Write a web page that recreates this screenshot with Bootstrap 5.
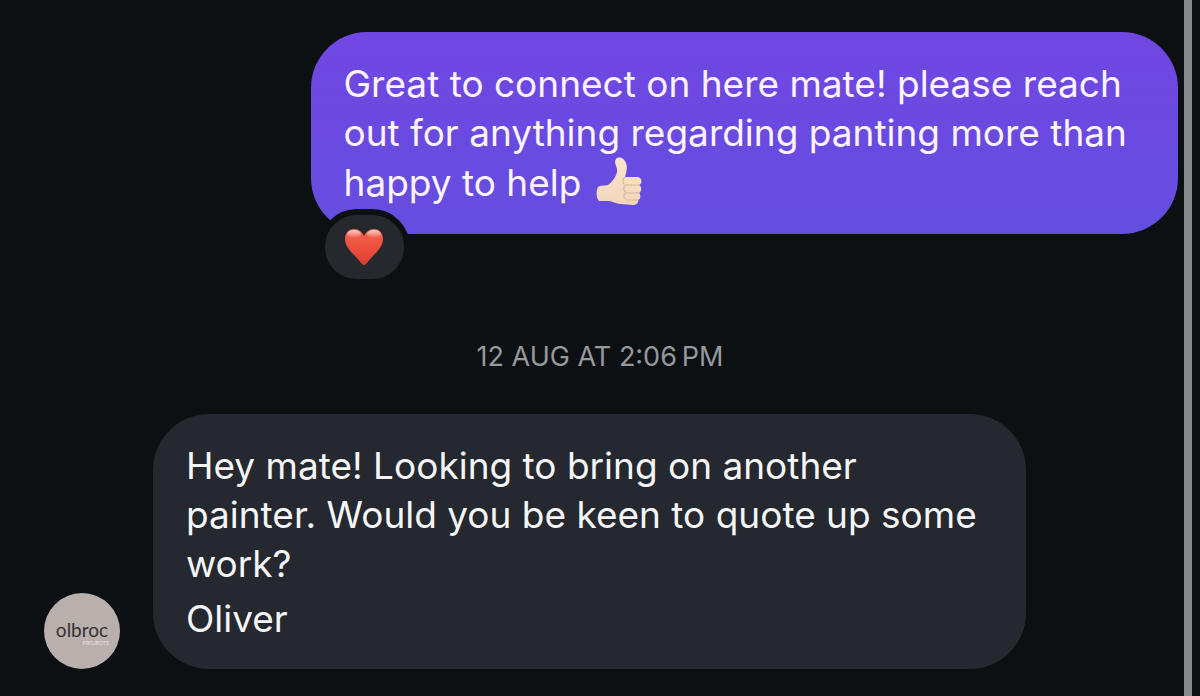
<!DOCTYPE html>
<html lang="en">
<head>
<meta charset="utf-8">
<meta name="viewport" content="width=device-width, initial-scale=1">
<title>Chat</title>
<link href="https://cdn.jsdelivr.net/npm/bootstrap@5.3.0/dist/css/bootstrap.min.css" rel="stylesheet">
<style>
  body { background: #0c1013; font-family: Inter, "Liberation Sans", sans-serif; }
  .thread { padding: 32px 6px 26px 44px; }
  .bubble { font-size: 37px; line-height: 49px; padding: 27px 33px; border-radius: 56px; color: #f4f5f7; }
  .bubble-sent { width: 76.5%; background: linear-gradient(#7046e2, #644edf); color: #fbf3ff; }
  .bubble-received { width: 77%; padding-right: 42px; padding-bottom: 26px; background: #25282e; }
  .signature { margin-top: 6px; }
  .reaction { left: 8px; top: 177px; width: 91px; height: 76px; border: 6px solid #0c1013; border-radius: 38px; background: #25292d; }
  .emoji { width: 46px; height: 49px; vertical-align: -10px; margin-left: 4px; }
  .stamp { font-size: 27px; line-height: 32px; color: #95989c; margin: 107px 0 41px; padding-right: 22px; }
  .avatar { width: 76px; height: 76px; background: #b9b0ad; color: #37312f; margin-right: 33px; }
  .avatar-name { font: 19px/18px Lato, sans-serif; margin-top: 4px; }
  .avatar-sub { font-size: 5px; line-height: 6px; color: #ece7e5; margin: 1px 11px 0 0; }
  .rail { width: 8px; margin-right: 8px; background: #88898b; }
</style>
</head>
<body>
<div class="d-flex min-vh-100">
  <main class="thread flex-grow-1 d-flex flex-column">
    <div class="d-flex justify-content-end">
      <div class="bubble bubble-sent position-relative">
        Great to connect on here mate! please reach out for anything regarding panting more than happy to help
        <svg class="emoji" viewBox="0 0 46 49" role="img" aria-label="Thumbs up">
          <defs>
            <linearGradient id="skin" x1="0" y1="0" x2="0" y2="1"><stop offset="0" stop-color="#fae6d0"/><stop offset="1" stop-color="#f1d6bb"/></linearGradient>
          </defs>
          <path fill="url(#skin)" d="M2 30C4 28 9 29 12 28C16 25 20 20 21 15C22 10 17 6 20 2C23 -1 28 1 30 6C32 11 30 16 29 20L41 20C46 20 47 26 43 28C46 30 46 34 43 36C45 38 45 42 42 43C43 46 40 48 37 48L25 47C20 47 16 44 13 44L3 44C0 41 0 34 2 30Z"/>
          <path fill="none" stroke="#d9b797" stroke-width="1.2" stroke-linecap="round" d="M29 20C27 21 26 24 28 27M43 28H30C27 29 27 34 30 35M43 36H30C27 37 27 41 30 42M42 43H31"/>
        </svg>
        <div class="reaction position-absolute d-flex align-items-center justify-content-center">
          <svg width="40" height="38" viewBox="0 0 40 38" role="img" aria-label="Heart">
            <defs>
              <linearGradient id="red" x1="0" y1="0" x2="0" y2="1"><stop offset="0" stop-color="#f5644f"/><stop offset=".5" stop-color="#ee5040"/><stop offset="1" stop-color="#dc4030"/></linearGradient>
              <linearGradient id="shine" x1="0" y1="0" x2="0" y2="1"><stop offset="0" stop-color="#fff" stop-opacity=".7"/><stop offset="1" stop-color="#fff" stop-opacity="0"/></linearGradient>
            </defs>
            <path fill="url(#red)" d="M20 37C18 37 15 32 11 28C5 22 1 17 1 11C1 5 5 1 10 1C15 1 18 4 20 8C22 4 25 1 30 1C35 1 39 5 39 11C39 17 35 22 29 28C25 32 22 37 20 37Z"/>
            <ellipse fill="url(#shine)" cx="10" cy="6" rx="7" ry="4"/>
            <ellipse fill="url(#shine)" cx="30" cy="6" rx="7" ry="4"/>
          </svg>
        </div>
      </div>
    </div>
    <time class="stamp text-center d-block">12 AUG AT 2:06&#8201;PM</time>
    <div class="d-flex align-items-end">
      <div class="avatar rounded-circle flex-shrink-0 d-flex flex-column align-items-center justify-content-center">
        <span class="avatar-name">olbroc</span>
        <span class="avatar-sub align-self-end">PROJECTS</span>
      </div>
      <div class="bubble bubble-received">
        <p class="mb-0">Hey mate! Looking to bring on another painter. Would you be keen to quote up some work?</p>
        <p class="signature mb-0">Oliver</p>
      </div>
    </div>
  </main>
  <div class="rail flex-shrink-0"></div>
</div>
<script src="https://cdn.jsdelivr.net/npm/bootstrap@5.3.0/dist/js/bootstrap.bundle.min.js"></script>
</body>
</html>
